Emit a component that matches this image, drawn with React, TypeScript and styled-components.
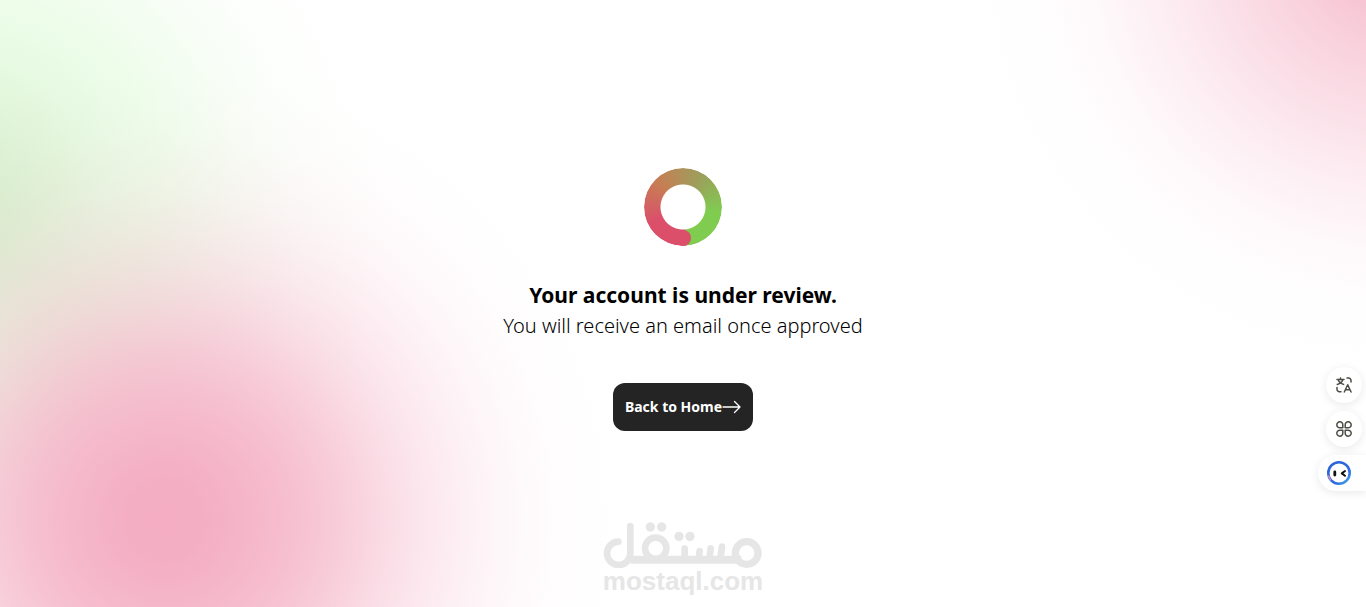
import React from "react";
import styled, { createGlobalStyle } from "styled-components";

const GlobalStyle = createGlobalStyle`
  * { box-sizing: border-box; }
  body { margin: 0; background: #fff; font-family: "Noto Sans", sans-serif; color: #000; }
`;

const Page = styled.div`
  position: relative;
  min-height: 100vh;
  display: flex;
  flex-direction: column;
  background:
    radial-gradient(circle at 165px calc(100% - 87px),
      rgba(244, 173, 195, 1) 0, rgba(244, 173, 195, 0.98) 40px, rgba(244, 173, 195, 0.88) 90px,
      rgba(244, 173, 195, 0.77) 130px, rgba(244, 173, 195, 0.63) 170px, rgba(244, 173, 195, 0.44) 218px,
      rgba(244, 173, 195, 0.31) 255px, rgba(244, 173, 195, 0.21) 290px, rgba(244, 173, 195, 0.11) 333px,
      rgba(244, 173, 195, 0.03) 390px, rgba(244, 173, 195, 0) 450px),
    radial-gradient(circle at calc(100% + 34px) -60px,
      rgba(244, 173, 195, 0.86) 0, rgba(244, 173, 195, 0.71) 70px, rgba(244, 173, 195, 0.54) 120px,
      rgba(244, 173, 195, 0.38) 180px, rgba(244, 173, 195, 0.21) 245px,
      rgba(244, 173, 195, 0.08) 310px, rgba(244, 173, 195, 0.02) 360px, rgba(244, 173, 195, 0) 430px),
    radial-gradient(circle at -40px 200px,
      rgba(208, 238, 196, 0.9) 0, rgba(212, 240, 202, 0.82) 60px, rgba(214, 246, 206, 0.6) 140px,
      rgba(214, 250, 206, 0.44) 200px, rgba(214, 248, 206, 0.2) 280px, rgba(214, 248, 206, 0.06) 350px,
      rgba(214, 248, 206, 0) 430px),
    #fff;
`;

const Main = styled.main`
  flex: 1;
  display: flex;
  flex-direction: column;
  align-items: center;
  padding-top: 168px;
  text-align: center;
`;

const Spinner = styled.div`
  position: relative;
  width: 78px;
  height: 78px;
`;

const Ring = styled.div`
  width: 100%;
  height: 100%;
  border-radius: 50%;
  background: conic-gradient(from 174deg, #db4f6b 0 70deg, #c77d54 140deg, #9d9e5c 215deg, #7fcc50 285deg 360deg);
  mask: radial-gradient(circle, transparent 22px, #000 23px);
`;

const RingCap = styled.span`
  position: absolute;
  left: 31px;
  bottom: 0;
  width: 16px;
  height: 16px;
  border-radius: 50%;
  background: #db4f6b;
`;

const Title = styled.h1`
  margin: 34px 0 0;
  font-size: 21px;
  line-height: 30px;
  font-weight: 700;
`;

const Message = styled.p`
  margin: 0;
  font-size: 20px;
  line-height: 32px;
  font-weight: 300;
`;

const HomeButton = styled.button`
  display: flex;
  align-items: center;
  height: 48px;
  margin-top: 41px;
  padding: 0 12px;
  border: 0;
  border-radius: 12px;
  background: #242424;
  color: #fff;
  font: 700 14px/24px "Noto Sans", sans-serif;
`;

const Watermark = styled.footer`
  display: flex;
  flex-direction: column;
  align-items: center;
  padding-bottom: 13px;
  color: #e6e6e6;
`;

const WatermarkName = styled.span`
  font: 700 26px/26px "Liberation Sans", Arial, sans-serif;
`;

const Tools = styled.aside`
  position: absolute;
  right: 0;
  bottom: 116px;
  display: flex;
  flex-direction: column;
  align-items: flex-end;
  gap: 8px;
`;

const ToolButton = styled.button<{ $docked?: boolean }>`
  display: flex;
  align-items: center;
  justify-content: ${(p) => (p.$docked ? "flex-start" : "center")};
  width: ${(p) => (p.$docked ? 48 : 36)}px;
  height: 36px;
  margin-right: ${(p) => (p.$docked ? 0 : 4)}px;
  padding: 0 0 0 ${(p) => (p.$docked ? 9 : 0)}px;
  border: 0;
  border-radius: ${(p) => (p.$docked ? "18px 0 0 18px" : "18px")};
  background: #fff;
  box-shadow: 0 2px 10px rgba(0, 0, 0, 0.09);
`;

const ArrowIcon = () => (
  <svg width="19" height="16" viewBox="0 0 19 16" fill="none" stroke="#fff" strokeWidth="1.3" strokeLinecap="round" strokeLinejoin="round">
    <path d="M1 8H18M12.500 2.500L18 8L12.500 13.500" />
  </svg>
);

const TranslateIcon = () => (
  <svg width="17" height="16" viewBox="0 0 17 16" fill="none" stroke="#4b4c43" strokeWidth="1.500" strokeLinecap="round" strokeLinejoin="round">
    <path d="M1 2.600H8M4.500 1V2.600M2.200 2.800C2.900 5 4.600 6.600 7.600 7.400M6.800 2.800C6.100 5 4.400 6.600 1.300 7.400" />
    <path d="M11 1H12.600A2.400 2.400 0 0 1 15 3.400V5" />
    <path d="M1 10.600V12.300A2.400 2.400 0 0 0 3.400 14.700H5" />
    <path d="M8.300 15L11.700 7.800L15.100 15M9.500 12.700H13.900" />
  </svg>
);

const AppsIcon = () => (
  <svg width="16" height="16" viewBox="0 0 16 16" fill="none" stroke="#4b4c43" strokeWidth="1.500" strokeLinejoin="round">
    <path d="M6.800 6.800H4A3 3 0 1 1 6.800 4Z" />
    <path d="M9.200 6.800H12A3 3 0 1 0 9.200 4Z" />
    <path d="M6.800 9.200H4A3 3 0 1 0 6.800 12Z" />
    <path d="M9.200 9.200H12A3 3 0 1 1 9.200 12Z" />
  </svg>
);

const AssistantIcon = () => (
  <svg width="24" height="24" viewBox="0 0 24 24" fill="none">
    <defs>
      <linearGradient id="assistant-ring" x1="0" y1="0" x2="1" y2="1">
        <stop offset="0" stopColor="#2c62d6" />
        <stop offset="0.7" stopColor="#2f6fdf" />
        <stop offset="1" stopColor="#49b4f0" />
      </linearGradient>
    </defs>
    <circle cx="12" cy="12" r="10.700" fill="#fff" stroke="url(#assistant-ring)" strokeWidth="2.600" />
    <path d="M1.500 14.500A10.700 10.700 0 0 0 4 19.200" stroke="#d98bb8" strokeWidth="1.500" />
    <path d="M7.800 11V14" stroke="#111" strokeWidth="2.800" strokeLinecap="round" />
    <path d="M18 10L14.800 12.400L18 14.800" stroke="#111" strokeWidth="2" strokeLinecap="round" strokeLinejoin="round" />
  </svg>
);

const MostaqlLogo = () => (
  <svg width="160" height="47" viewBox="25 27 480 141" fill="none" stroke="currentColor" strokeWidth="20" strokeLinecap="round">
    <path d="M71 89A35 35 0 1 0 107 124V42" />
    <path d="M108 143H440" strokeWidth="24" strokeLinecap="butt" />
    <circle cx="183" cy="109" r="32" />
    <circle cx="456" cy="123" r="34" strokeWidth="22" />
    <path d="M270 110V140M315 117L312 140M348 109L344 140M382 104L377 140" />
    <g fill="currentColor" stroke="none">
      <circle cx="167" cy="45" r="14" />
      <circle cx="201" cy="45" r="14" />
      <circle cx="253" cy="73" r="14" />
      <circle cx="286" cy="73" r="14" />
    </g>
  </svg>
);

export default function App() {
  return (
    <Page>
      <GlobalStyle />
      <Main>
        <Spinner role="status" aria-label="Under review">
          <Ring />
          <RingCap />
        </Spinner>
        <Title>Your account is under review.</Title>
        <Message>You will receive an email once approved</Message>
        <HomeButton type="button">
          Back to Home
          <ArrowIcon />
        </HomeButton>
      </Main>
      <Watermark>
        <MostaqlLogo />
        <WatermarkName>mostaql.com</WatermarkName>
      </Watermark>
      <Tools>
        <ToolButton type="button" aria-label="Translate">
          <TranslateIcon />
        </ToolButton>
        <ToolButton type="button" aria-label="Apps">
          <AppsIcon />
        </ToolButton>
        <ToolButton type="button" aria-label="Assistant" $docked>
          <AssistantIcon />
        </ToolButton>
      </Tools>
    </Page>
  );
}
